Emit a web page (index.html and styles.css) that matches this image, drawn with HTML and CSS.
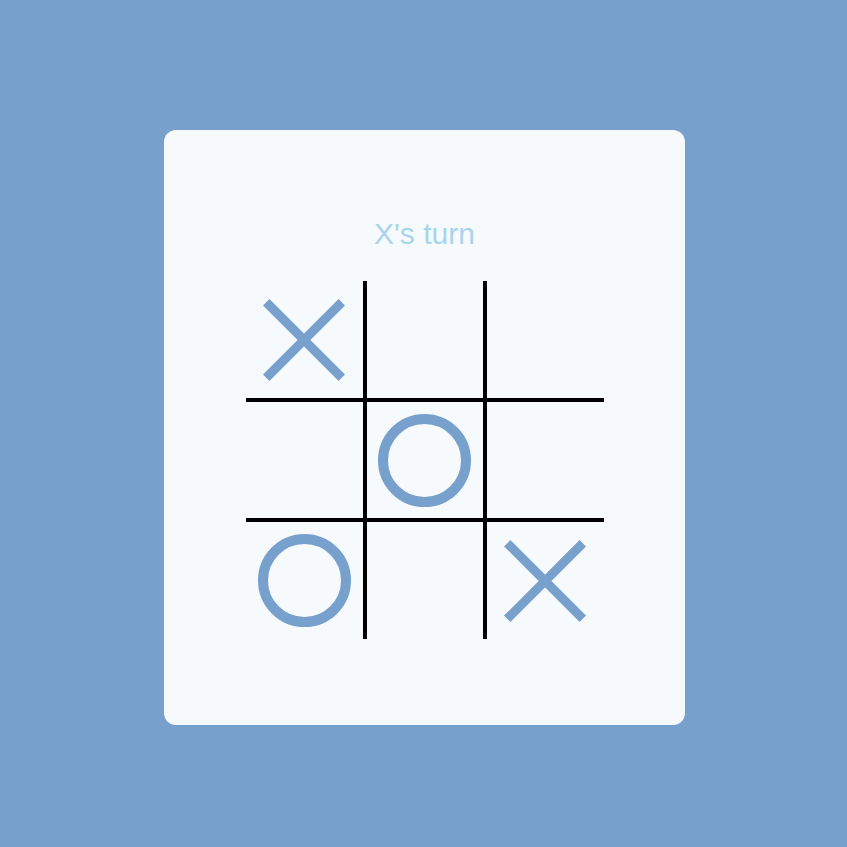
FILE: index.html
```html
<!DOCTYPE html>
<html lang="en">
<head>
<meta charset="utf-8">
<title>Tic Tac Toe</title>
<link rel="stylesheet" href="styles.css">
</head>
<body>
<main class="card">
  <h1 class="status">X's turn</h1>
  <div class="board">
    <div class="cell"><svg class="x" viewBox="0 0 82 82"><line x1="3.2" y1="3.2" x2="78.8" y2="78.8"/><line x1="78.8" y1="3.2" x2="3.2" y2="78.8"/></svg></div>
    <div class="cell"></div>
    <div class="cell"></div>
    <div class="cell"></div>
    <div class="cell"><div class="o"></div></div>
    <div class="cell"></div>
    <div class="cell"><div class="o"></div></div>
    <div class="cell"></div>
    <div class="cell"><svg class="x" viewBox="0 0 82 82"><line x1="3.2" y1="3.2" x2="78.8" y2="78.8"/><line x1="78.8" y1="3.2" x2="3.2" y2="78.8"/></svg></div>
  </div>
</main>
</body>
</html>
```
FILE: styles.css
```css
html, body {
  margin: 0;
  padding: 0;
}
body {
  background: #77a0cd;
  min-height: 100vh;
  display: flex;
  justify-content: center;
  align-items: flex-start;
  padding-top: 130px;
  box-sizing: border-box;
  font-family: "Liberation Sans", Arial, sans-serif;
}
.card {
  width: 521px;
  box-sizing: border-box;
  background: #f6fafc;
  border-radius: 12px;
  padding: 87px 0 86px;
  display: flex;
  flex-direction: column;
  align-items: center;
  gap: 30px;
  margin-left: 2px;
}
.status {
  margin: 0;
  font-size: 30px;
  line-height: 34px;
  font-weight: normal;
  color: #a9d4ef;
}
.board {
  display: grid;
  grid-template-columns: 117px 116px 117px;
  grid-template-rows: 117px 116px 117px;
  gap: 4px;
  background: #000;
}
.cell {
  background: #f6fafc;
  display: flex;
  align-items: center;
  justify-content: center;
}
.x {
  width: 82px;
  height: 82px;
  display: block;
}
.x line {
  stroke: #77a0cd;
  stroke-width: 9;
  stroke-linecap: butt;
}
.o {
  width: 73px;
  height: 73px;
  border: 10px solid #77a0cd;
  border-radius: 50%;
}
```
